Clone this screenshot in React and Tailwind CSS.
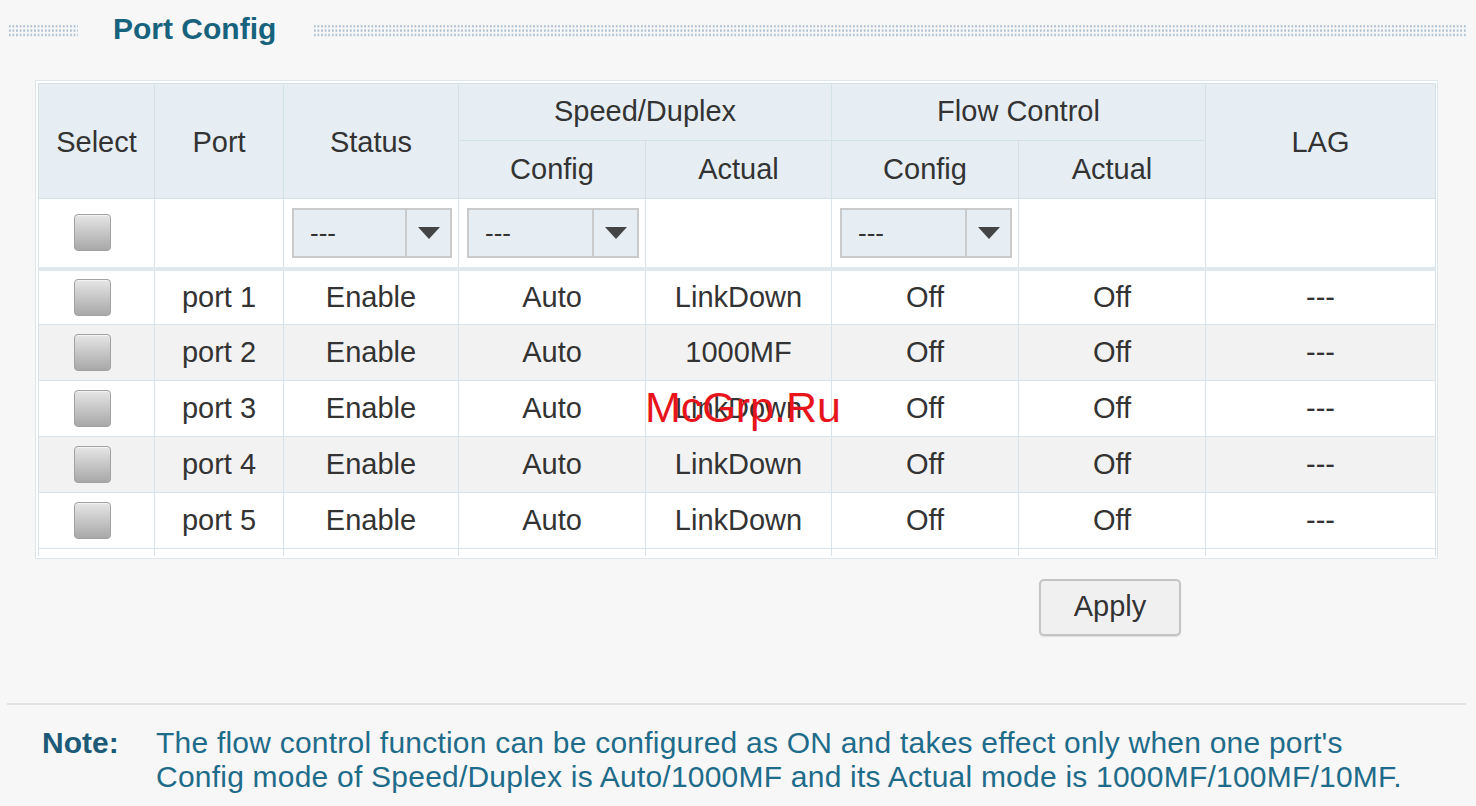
import React from 'react';

const ports = [
  { name: 'port 1', status: 'Enable', sdConfig: 'Auto', sdActual: 'LinkDown', fcConfig: 'Off', fcActual: 'Off', lag: '---' },
  { name: 'port 2', status: 'Enable', sdConfig: 'Auto', sdActual: '1000MF', fcConfig: 'Off', fcActual: 'Off', lag: '---' },
  { name: 'port 3', status: 'Enable', sdConfig: 'Auto', sdActual: 'LinkDown', fcConfig: 'Off', fcActual: 'Off', lag: '---' },
  { name: 'port 4', status: 'Enable', sdConfig: 'Auto', sdActual: 'LinkDown', fcConfig: 'Off', fcActual: 'Off', lag: '---' },
  { name: 'port 5', status: 'Enable', sdConfig: 'Auto', sdActual: 'LinkDown', fcConfig: 'Off', fcActual: 'Off', lag: '---' },
];

const Dots = ({ className }) => (
  <div
    className={`h-[13px] bg-[radial-gradient(circle,#a7bdd0_0.9px,transparent_1.2px)] bg-[length:3.6px_4.4px] ${className}`}
  />
);

const CheckBox = () => (
  <div className="ml-[35px] h-[37px] w-[37px] rounded-[4px] border border-[#a2a2a2] bg-linear-to-b from-[#e6e6e6] to-[#a8a8a8] shadow-[inset_0_1px_0_#f4f4f4]" />
);

const Dropdown = ({ width }) => (
  <div className={`flex h-[50px] ${width} border-2 border-[#cacaca] bg-[#e6eef3]`}>
    <div className="flex flex-1 items-center pl-[16px] text-[26px] leading-none text-[#333]">---</div>
    <div className="flex w-[45px] items-center justify-center border-l-2 border-[#cacaca]">
      <svg width="22" height="12" viewBox="0 0 22 12">
        <path d="M0 0 L22 0 L11 12 Z" fill="#444" />
      </svg>
    </div>
  </div>
);

const th = 'border border-[#d3e1e9] bg-[#e6eef3] font-normal text-[#333]';
const td = 'border border-[#d6e3ea] text-center';

export default function App() {
  return (
    <div className="relative min-h-[806px] w-[1476px] bg-[#f7f7f7] font-['Liberation_Sans',Arial,sans-serif] text-[#333]">
      {/* title bar */}
      <div className="flex h-[60px] items-center pb-[3px]">
        <Dots className="ml-[8px] mt-[3px] w-[70px]" />
        <h2 className="ml-[35px] mr-[37px] text-[30px] font-bold leading-none text-[#17637d]">Port Config</h2>
        <Dots className="mr-[10px] mt-[3px] flex-1" />
      </div>

      {/* table */}
      <div className="ml-[35px] mt-[20px] w-[1403px] border border-[#dce7ed] bg-white p-[2px]">
        <table className="w-[1397px] table-fixed border-collapse text-[29px]">
          <colgroup>
            <col className="w-[116px]" />
            <col className="w-[129px]" />
            <col className="w-[175px]" />
            <col className="w-[187px]" />
            <col className="w-[186px]" />
            <col className="w-[187px]" />
            <col className="w-[187px]" />
            <col className="w-[230px]" />
          </colgroup>
          <thead>
            <tr className="h-[57px]">
              <th rowSpan={2} className={`${th} pt-[4px]`}>Select</th>
              <th rowSpan={2} className={`${th} pt-[4px]`}>Port</th>
              <th rowSpan={2} className={`${th} pt-[4px]`}>Status</th>
              <th colSpan={2} className={th}>Speed/Duplex</th>
              <th colSpan={2} className={th}>Flow Control</th>
              <th rowSpan={2} className={`${th} pt-[4px]`}>LAG</th>
            </tr>
            <tr className="h-[58px]">
              <th className={th}>Config</th>
              <th className={th}>Actual</th>
              <th className={th}>Config</th>
              <th className={th}>Actual</th>
            </tr>
          </thead>
          <tbody>
            <tr className="h-[70px] border-b-[4px] border-[#dfe8ee] bg-white">
              <td className={td}><CheckBox /></td>
              <td className={td}></td>
              <td className={td}>
                <div className="flex justify-center pl-[2px]"><Dropdown width="w-[160px]" /></div>
              </td>
              <td className={td}>
                <div className="flex justify-center pl-[2px]"><Dropdown width="w-[172px]" /></div>
              </td>
              <td className={td}></td>
              <td className={td}>
                <div className="flex justify-center pl-[2px]"><Dropdown width="w-[172px]" /></div>
              </td>
              <td className={td}></td>
              <td className={td}></td>
            </tr>
            {ports.map((p, i) => (
              <tr key={p.name} className={`h-[56px] ${i % 2 === 1 ? 'bg-[#f2f2f2]' : 'bg-white'}`}>
                <td className={td}><CheckBox /></td>
                <td className={td}>{p.name}</td>
                <td className={td}>{p.status}</td>
                <td className={td}>{p.sdConfig}</td>
                <td className={td}>{p.sdActual}</td>
                <td className={td}>{p.fcConfig}</td>
                <td className={td}>{p.fcActual}</td>
                <td className={td}>{p.lag}</td>
              </tr>
            ))}
            <tr className="h-[7px]">
              {Array.from({ length: 8 }).map((_, i) => (
                <td key={i} className="border-x border-[#d6e3ea] p-0"></td>
              ))}
            </tr>
          </tbody>
        </table>
      </div>

      {/* apply */}
      <div className="mt-[20px] flex pl-[1039px]">
        <button className="h-[57px] w-[142px] rounded-[5px] border-2 border-[#c4c4c4] bg-[#f0f0f0] text-[29px] text-[#333] shadow-[0_1px_1px_#ddd]">
          Apply
        </button>
      </div>

      {/* divider */}
      <div className="ml-[7px] mt-[67px] h-[2px] w-[1459px] bg-[#e3e3e3]" />

      {/* note */}
      <div className="mt-[21px] flex text-[30px] leading-[34px]">
        <div className="ml-[42px] w-[114px] font-bold text-[#1c5a78]">Note:</div>
        <div className="tracking-[0.22px] text-[#1f6c8a]">
          The flow control function can be configured as ON and takes effect only when one port's
          <br />
          Config mode of Speed/Duplex is Auto/1000MF and its Actual mode is 1000MF/100MF/10MF.
        </div>
      </div>

      {/* watermark */}
      <div className="pointer-events-none absolute left-[645px] top-[386px] text-[43px] leading-none text-[#e8141b]">
        McGrp.Ru
      </div>
    </div>
  );
}
